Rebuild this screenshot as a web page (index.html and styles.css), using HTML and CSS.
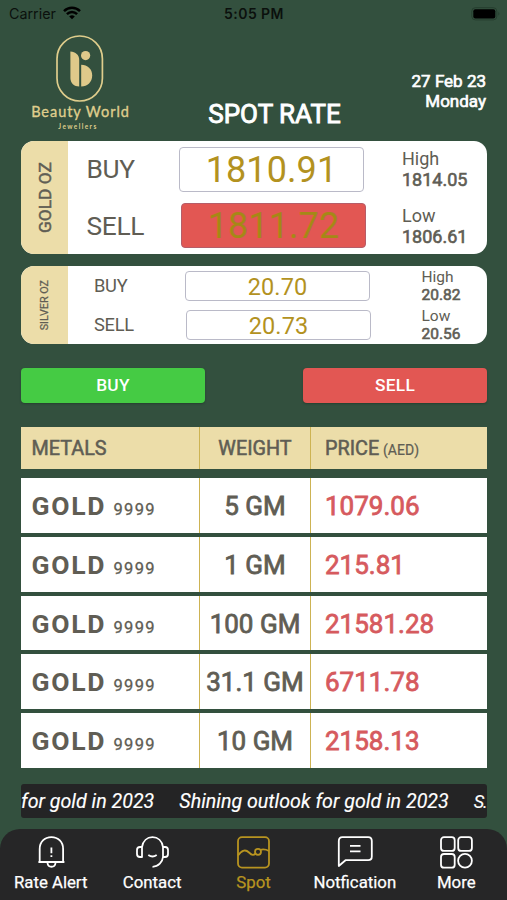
FILE: index.html
```html
<!DOCTYPE html>
<html lang="en">
<head>
<meta charset="utf-8">
<title>Spot Rate</title>
<link rel="stylesheet" href="styles.css">
</head>
<body>
<div class="status">
  <div class="carrier"><span>Carrier</span>
    <svg width="18" height="14" viewBox="0 0 18 14" fill="none" stroke="#000" stroke-width="2.5"><path d="M1 5.1C5.6.6 12.4.6 17 5.1M3.9 8.2C6.8 5.3 11.2 5.3 14.1 8.2"/><path d="M9 13.3 6.2 10.5Q9 8.1 11.8 10.5Z" fill="#000" stroke="none"/></svg>
  </div>
  <div class="clock">5:05 PM</div>
  <div class="battery">
    <svg width="30" height="14" viewBox="0 0 30 14"><rect x=".8" y=".7" width="25" height="12.2" rx="3.5" fill="none" stroke="#263e2f" stroke-width="1"/><rect x="2.3" y="2.2" width="22" height="9.2" rx="2" fill="#000"/><path d="M27.4 4.8q2 2 0 4z" fill="#263e2f"/></svg>
  </div>
</div>
<header class="header">
  <div class="brand">
    <svg width="48" height="68" viewBox="0 0 48 68"><rect x="1" y="1" width="45.4" height="65" rx="22.7" fill="none" stroke="#dfcd8c" stroke-width="1.7"/><g fill="#dfc98a"><path d="M14.4 16.5C19.5 17 23.2 19.5 23.2 25V51.5C18.2 51.5 14.4 48 14.4 43Z"/><circle cx="29.6" cy="20.6" r="4.6"/><path d="M25.2 29.8C31.5 29.8 36.2 34 36.2 40.5S31.5 51.5 25.2 51.5Z"/></g></svg>
    <div class="brand-name">Beauty World</div>
    <div class="brand-sub">Jewellers</div>
  </div>
  <h1 class="title">SPOT RATE</h1>
  <div class="date">27 Feb 23<br>Monday</div>
</header>

<section class="card gold">
  <div class="tab"><span>GOLD OZ</span></div>
  <div class="quotes">
    <div class="quote"><span class="side">BUY</span><div class="rate">1810.91</div><div class="range">High<b>1814.05</b></div></div>
    <div class="quote"><span class="side">SELL</span><div class="rate down">1811.72</div><div class="range">Low<b>1806.61</b></div></div>
  </div>
</section>
<section class="card silver">
  <div class="tab"><span>SILVER OZ</span></div>
  <div class="quotes">
    <div class="quote"><span class="side">BUY</span><div class="rate">20.70</div><div class="range">High<b>20.82</b></div></div>
    <div class="quote"><span class="side">SELL</span><div class="rate second">20.73</div><div class="range">Low<b>20.56</b></div></div>
  </div>
</section>

<div class="actions"><button class="buy">BUY</button><button class="sell">SELL</button></div>

<div class="row head"><div class="metal">METALS</div><div class="weight">WEIGHT</div><div class="price">PRICE <small>(AED)</small></div></div>
<main class="rows">
  <div class="row"><div class="metal">GOLD <small>9999</small></div><div class="weight">5 GM</div><div class="price">1079.06</div></div>
  <div class="row"><div class="metal">GOLD <small>9999</small></div><div class="weight">1 GM</div><div class="price">215.81</div></div>
  <div class="row"><div class="metal">GOLD <small>9999</small></div><div class="weight">100 GM</div><div class="price">21581.28</div></div>
  <div class="row"><div class="metal">GOLD <small>9999</small></div><div class="weight">31.1 GM</div><div class="price">6711.78</div></div>
  <div class="row"><div class="metal">GOLD <small>9999</small></div><div class="weight">10 GM</div><div class="price">2158.13</div></div>
</main>

<div class="ticker"><span>for gold in 2023</span><span>Shining outlook for gold in 2023</span><span>S.</span></div>

<nav class="nav">
  <a class="item"><svg width="36" height="34" viewBox="0 0 36 34"><path d="M6.7 27V14C6.7 7 11.5 2.2 18.4 2.2S30.1 7 30.1 14V27M5.4 27H31.4M14.5 28C15 33 22 33 22.5 28M18.4 12.5V18.3M18.4 20.2V22"/></svg><span>Rate Alert</span></a>
  <a class="item"><svg width="36" height="34" viewBox="0 0 36 34"><path d="M8 12V22H6Q3 22 3 19V15Q3 12 6 12H8C9 6 13 2.2 18.5 2.2S28 6 29 12V22C28.5 27 24.5 31.7 18.5 31.8M29 12H31Q34 12 34 15V19Q34 22 31 22H29M14.3 20Q18.5 23 22.7 20"/></svg><span>Contact</span></a>
  <a class="item active"><svg width="36" height="34" viewBox="0 0 36 34"><rect x="3" y="2.2" width="31" height="30.4" rx="4"/><path d="M3 20.5C7 14.5 11 14.5 14 17.5S19 20.5 20.8 18"/><circle cx="23" cy="16.8" r="3"/><path d="M25.2 14.8C28 14.2 30.5 14 34 16"/></svg><span>Spot</span></a>
  <a class="item"><svg width="36" height="34" viewBox="0 0 36 34"><path d="M1.8 31V6Q1.8 2.2 5.5 2.2H31.2Q34.8 2.2 34.8 6V21.5Q34.8 25.2 31.2 25.2H8.5ZM13 10.8H23.5M13 16.3H23.5"/></svg><span>Notfication</span></a>
  <a class="item"><svg width="36" height="34" viewBox="0 0 36 34"><rect x="3" y="2.2" width="13.7" height="13.7" rx="3"/><rect x="20.2" y="2.2" width="13.7" height="13.7" rx="3"/><rect x="3" y="19" width="13.7" height="13.7" rx="3"/><circle cx="27" cy="25.8" r="6.9"/></svg><span>More</span></a>
</nav>
</body>
</html>
```
FILE: styles.css
```css
* { box-sizing: border-box; }
body { margin: 0; width: 507px; height: 900px; overflow: hidden; background: #33503e; font-family: Roboto, "Liberation Sans", sans-serif; color: #605d54; display: flex; flex-direction: column; }
.status { flex: none; height: 28px; display: grid; grid-template-columns: 1fr auto 1fr; align-items: center; padding: 0 6px 0 9px; color: #0b100d; font: 500 14px/28px Inter, sans-serif; }
.carrier { display: flex; align-items: center; gap: 7px; font-weight: 400; font-size: 14.3px; }
.carrier svg { margin-top: -3px; }
.clock { font-weight: 600; letter-spacing: .45px; margin-left: -2px; }
.battery { display: flex; justify-content: flex-end; }
.header { flex: none; height: 113px; padding: 7px 21px 0 30px; display: grid; grid-template-columns: 100px 1fr 100px; color: #fff; }
.brand { display: flex; flex-direction: column; align-items: center; color: #dfcd8c; white-space: nowrap; }
.brand svg { flex: none; margin-left: -1px; }
.brand-name { font: 400 14.5px/18px Lato, sans-serif; letter-spacing: .95px; -webkit-text-stroke: .35px; margin-top: 0; margin-left: 1px; }
.brand-sub { font: 700 6.5px/8px Lato, sans-serif; letter-spacing: 1.4px; margin-top: 2px; margin-left: -4px; }
.title { margin: 63px 0 0 33px; text-align: center; font-weight: 400; font-size: 26px; line-height: 32px; white-space: nowrap; -webkit-text-stroke: .9px; }
.date { text-align: right; font-size: 17px; line-height: 19.5px; font-weight: 400; margin-top: 37px; white-space: nowrap; -webkit-text-stroke: .65px; }
.card { flex: none; margin: 0 20px 0 21px; display: flex; background: #fff; border-radius: 13px; overflow: hidden; }
.gold { height: 113px; }
.silver { height: 78px; margin-top: 12px; }
.tab { width: 47px; background: #ecdda9; display: grid; place-items: center; }
.tab span { writing-mode: vertical-rl; transform: rotate(180deg); font-weight: 400; font-size: 17.4px; white-space: nowrap; -webkit-text-stroke: .5px; }
.silver .tab span { font-size: 10.8px; -webkit-text-stroke: .25px; }
.quotes { flex: 1; display: flex; flex-direction: column; }
.quote { display: flex; align-items: center; height: 56.5px; }
.side { width: 111px; padding-left: 18.5px; font-size: 26.3px; letter-spacing: -.3px; }
.rate { width: 185px; height: 45px; border: 1px solid #babac8; border-radius: 4px; color: #b3921f; font-size: 36px; line-height: 45px; letter-spacing: .1px; text-align: center; }
.down { background: #e25753; border-color: #b65d68; color: #a58816; transform: translateX(2px); }
.range { margin-left: 38px; font-size: 18px; line-height: 21px; }
.range b { display: block; font-weight: 400; -webkit-text-stroke: .6px; }
.silver .quote { height: 39px; }
.silver .side { width: 117px; padding-left: 26px; font-size: 18.3px; }
.silver .rate { height: 30px; font-size: 23.5px; line-height: 30px; }
.silver .second { transform: translateX(1px); }
.silver .range { margin-left: 51.5px; font-size: 15.5px; line-height: 18px; }
.actions { flex: none; display: flex; justify-content: space-between; margin: 24px 20px 0 21px; }
button { width: 184px; height: 35px; border: 0; border-radius: 4px; color: #fff; font: 500 17.3px/35px Roboto, sans-serif; padding: 0; letter-spacing: .3px; box-shadow: 0 1px 2px #1c352799; }
.buy { background: #45cb44; }
.sell { background: #e25753; }
.row { flex: none; margin: 0 20px 0 21px; height: 54.75px; background: #fff; display: grid; grid-template: 100% / 179px 111px 1fr; white-space: nowrap; font-size: 26px; line-height: 56px; -webkit-text-stroke: .8px; }
.head { height: 42.5px; margin-top: 23.5px; margin-bottom: 9px; background: #ecdda9; font-size: 19.8px; line-height: 43px; -webkit-text-stroke: .55px; }
.metal { border-right: 1.5px solid #cdb353; padding-left: 10.5px; }
.weight { border-right: 1.5px solid #cdb353; text-align: center; }
.price { padding-left: 14px; color: #d65a5e; }
.head .price { color: #605d54; }
small { -webkit-text-stroke: .2px; }
.head small { font-size: 14px; margin-left: -1px; }
.rows { display: flex; flex-direction: column; gap: 4px; }
.rows .metal { font-weight: 700; font-size: 26.5px; letter-spacing: 1.7px; -webkit-text-stroke: 0; }
.rows small { font-size: 16.5px; font-weight: 400; letter-spacing: 1.3px; margin-left: -1px; -webkit-text-stroke: .3px; }
.ticker { flex: none; margin: 16.25px 20px 0 21px; height: 34px; border-radius: 3px; background: #242425; color: #fff; overflow: hidden; display: flex; gap: 25px; white-space: nowrap; font-style: italic; font-size: 19.65px; line-height: 35px; -webkit-text-stroke: .15px; }
.ticker span { flex: none; }
.ticker span:last-child { font-size: 18px; letter-spacing: -1px; }
.nav { flex: none; margin-top: 10.5px; height: 72px; background: #262627; border-radius: 20px 20px 0 0; display: grid; grid-template-columns: repeat(5, 101.4px); color: #fff; padding-top: 6.5px; }
.item { display: flex; flex-direction: column; align-items: center; gap: .5px; font-size: 16.8px; line-height: 24px; -webkit-text-stroke: .25px; }
.item svg { flex: none; fill: none; stroke: currentColor; stroke-width: 1.8; stroke-linejoin: round; }
.active { color: #b89420; }
```
